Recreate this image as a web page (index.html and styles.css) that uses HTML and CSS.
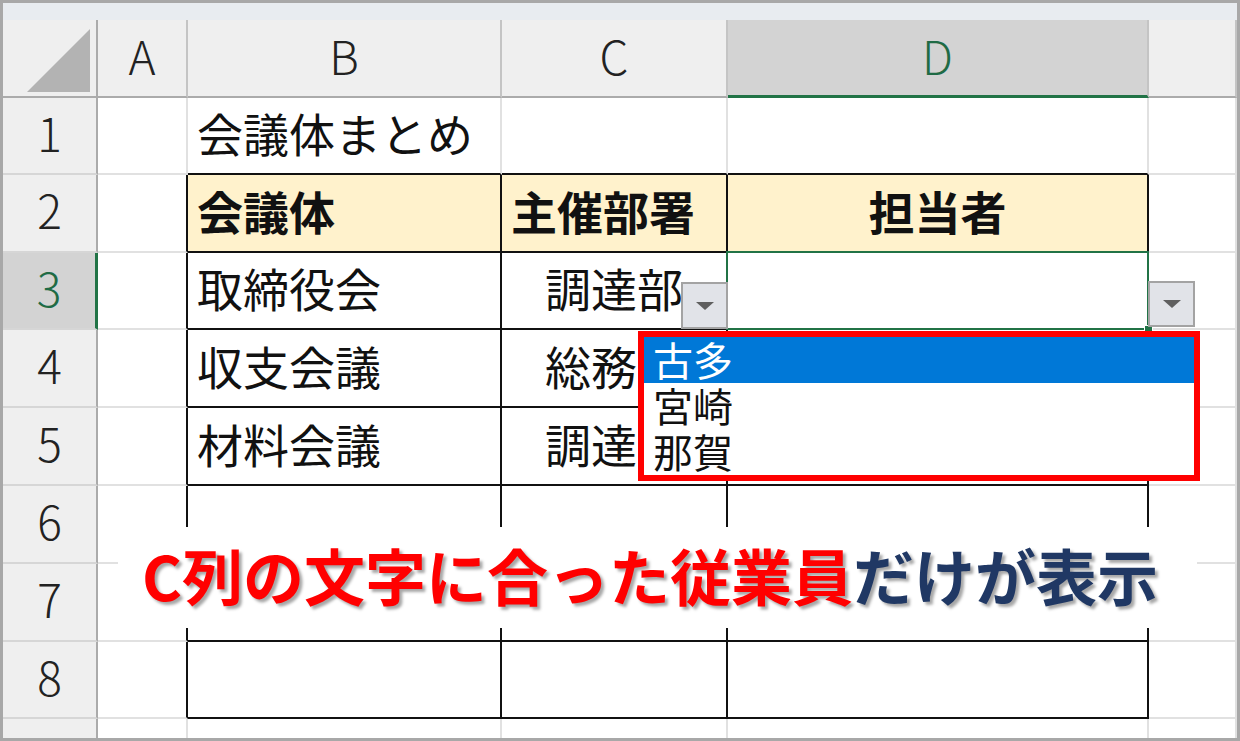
FILE: index.html
```html
<!DOCTYPE html>
<html lang="ja">
<head>
<meta charset="utf-8">
<title>会議体まとめ</title>
<link rel="stylesheet" href="styles.css">
</head>
<body>
<div class="frame">
  <div class="topstrip"></div>
  <div class="sheet">
    <!-- header row -->
    <div class="cell corner"><svg class="corner-tri" width="63" height="63" viewBox="0 0 63 63"><polygon points="63,0 63,63 0,63" fill="#b3b3b3"/></svg></div>
    <div class="cell ch">A</div>
    <div class="cell ch">B</div>
    <div class="cell ch">C</div>
    <div class="cell ch ch-sel">D</div>
    <div class="cell ch"></div>

    <!-- row 1 -->
    <div class="cell rh">1</div>
    <div class="cell"></div>
    <div class="cell top-edge txt">会議体まとめ</div>
    <div class="cell top-edge"></div>
    <div class="cell top-edge"></div>
    <div class="cell"></div>

    <!-- row 2 -->
    <div class="cell rh">2</div>
    <div class="cell left-edge"></div>
    <div class="cell t th txt">会議体</div>
    <div class="cell t th txt">主催部署</div>
    <div class="cell t th txt center">担当者</div>
    <div class="cell"></div>

    <!-- row 3 -->
    <div class="cell rh rh-sel">3</div>
    <div class="cell left-edge"></div>
    <div class="cell t txt">取締役会</div>
    <div class="cell t txt center">調達部<span class="dd-btn dd-c"><span class="dd-arrow"></span></span></div>
    <div class="cell t selected"><span class="fill-handle"></span></div>
    <div class="cell"><span class="dd-btn dd-e"><span class="dd-arrow"></span></span></div>

    <!-- row 4 -->
    <div class="cell rh">4</div>
    <div class="cell left-edge"></div>
    <div class="cell t txt">収支会議</div>
    <div class="cell t txt center">総務部</div>
    <div class="cell t"></div>
    <div class="cell"></div>

    <!-- row 5 -->
    <div class="cell rh">5</div>
    <div class="cell left-edge"></div>
    <div class="cell t txt">材料会議</div>
    <div class="cell t txt center">調達部</div>
    <div class="cell t"></div>
    <div class="cell"></div>

    <!-- row 6 -->
    <div class="cell rh">6</div>
    <div class="cell left-edge"></div>
    <div class="cell t"></div>
    <div class="cell t"></div>
    <div class="cell t"></div>
    <div class="cell"></div>

    <!-- row 7 -->
    <div class="cell rh">7</div>
    <div class="cell left-edge"></div>
    <div class="cell t"></div>
    <div class="cell t"></div>
    <div class="cell t"></div>
    <div class="cell"></div>

    <!-- row 8 -->
    <div class="cell rh">8</div>
    <div class="cell left-edge"></div>
    <div class="cell t"></div>
    <div class="cell t"></div>
    <div class="cell t"></div>
    <div class="cell"></div>

    <!-- partial row 9 -->
    <div class="cell rh last"></div>
    <div class="cell last"></div>
    <div class="cell last"></div>
    <div class="cell last"></div>
    <div class="cell last"></div>
    <div class="cell last"></div>

    <!-- dropdown list -->
    <div class="dd-list">
      <div class="dd-item active">古多</div>
      <div class="dd-item">宮崎</div>
      <div class="dd-item">那賀</div>
    </div>

    <!-- caption -->
    <div class="caption"><span class="red">C列の文字に合った従業員</span><span class="navy">だけが表示</span></div>
  </div>
</div>
</body>
</html>
```

FILE: styles.css
```css
* { box-sizing: border-box; }
html, body { margin: 0; padding: 0; background: #ffffff; }
body {
  font-family: "Noto Sans CJK JP", "Noto Sans", sans-serif;
  width: 1240px;
  height: 741px;
  overflow: hidden;
}
.frame {
  width: 1240px;
  height: 741px;
  border: 3px solid #a8a8a8;
  display: flex;
  flex-direction: column;
  background: #ffffff;
}
.topstrip {
  height: 17px;
  flex: none;
  background: #e8ecf0;
}
.sheet {
  position: relative;
  flex: 1;
  display: grid;
  grid-template-columns: 95px 90px 314px 226px 421px 1fr;
  grid-template-rows: 78px 77px 78px 77px 78px 78px 78px 78px 77px 1fr;
}
.cell {
  position: relative;
  border-right: 2px solid #e1e1e1;
  border-bottom: 2px solid #e1e1e1;
  display: flex;
  align-items: center;
  font-size: 46px;
  font-weight: 400;
  color: #111;
  line-height: 1;
  white-space: nowrap;
  min-width: 0;
  padding-bottom: 7px;
}
.cell.last { border-bottom: none; padding-bottom: 0; }

/* headers */
.ch, .rh, .corner {
  background: #efefef;
  justify-content: center;
  font-size: 46px;
  font-weight: 300;
  color: #222;
  font-family: "Noto Sans CJK JP", "Noto Sans", sans-serif;
}
.ch {
  border-right: 2px solid #c4c4c4;
  border-bottom: 2px solid #ababab;
  padding-bottom: 6px;
}
.corner {
  border-right: 2px solid #ababab;
  border-bottom: 2px solid #ababab;
  align-items: flex-end;
  justify-content: flex-end;
  padding: 0 6px 4px 0;
}
.corner-tri { display: block; }
.rh {
  border-right: 2px solid #ababab;
  border-bottom: 2px solid #d6d6d6;
  padding-bottom: 8px;
}
.ch-sel {
  background: #d3d3d3;
  color: #1f6b45;
  border-bottom: 3px solid #217346;
}
.rh-sel {
  background: #d3d3d3;
  color: #1f6b45;
  border-right: 3px solid #217346;
}

/* table */
.top-edge { border-bottom: 2px solid #111; }
.left-edge { border-right: 2px solid #111; }
.t {
  border-right: 2px solid #111;
  border-bottom: 2px solid #111;
}
.th {
  background: #fff2cc;
  font-weight: 700;
}
.txt { padding-left: 9px; }
.txt.center { justify-content: center; padding-left: 0; }

/* selection */
.selected::after {
  content: "";
  position: absolute;
  left: -2px;
  top: -2px;
  right: -2px;
  bottom: -2px;
  border: 2px solid #217346;
  pointer-events: none;
}
.fill-handle {
  position: absolute;
  right: -6px;
  bottom: -6px;
  width: 9px;
  height: 9px;
  background: #217346;
  border: 1px solid #ffffff;
  z-index: 2;
}

/* dropdown buttons */
.dd-btn {
  position: absolute;
  bottom: -1px;
  width: 47px;
  height: 47px;
  background: #e1e3e8;
  border: 2px solid #a3a3a3;
  display: flex;
  align-items: center;
  justify-content: center;
  z-index: 3;
}
.dd-c { right: -2px; }
.dd-e { left: -1px; bottom: 1px; height: 46px; }
.dd-arrow {
  width: 0;
  height: 0;
  border-left: 9px solid transparent;
  border-right: 9px solid transparent;
  border-top: 8px solid #5f5f5f;
}

/* dropdown list */
.dd-list {
  position: absolute;
  left: 635px;
  top: 311px;
  width: 562px;
  height: 150px;
  border: 6px solid #ff0000;
  background: #ffffff;
  z-index: 5;
  display: flex;
  flex-direction: column;
}
.dd-item {
  height: 46px;
  padding-left: 9px;
  font-size: 40px;
  line-height: 44px;
  color: #111;
  white-space: nowrap;
}
.dd-item.active {
  background: #0078d7;
  color: #ffffff;
}

/* caption */
.caption {
  position: absolute;
  left: 115px;
  top: 507px;
  width: 1079px;
  height: 101px;
  background: #ffffff;
  z-index: 4;
  display: flex;
  align-items: center;
  padding-left: 24px;
  padding-bottom: 6px;
  font-size: 61px;
  font-weight: 700;
  line-height: 1;
  white-space: nowrap;
  text-shadow: 3px 3px 3px rgba(0, 0, 0, 0.35);
}
.red { color: #ff0000; }
.navy { color: #203864; }
```
